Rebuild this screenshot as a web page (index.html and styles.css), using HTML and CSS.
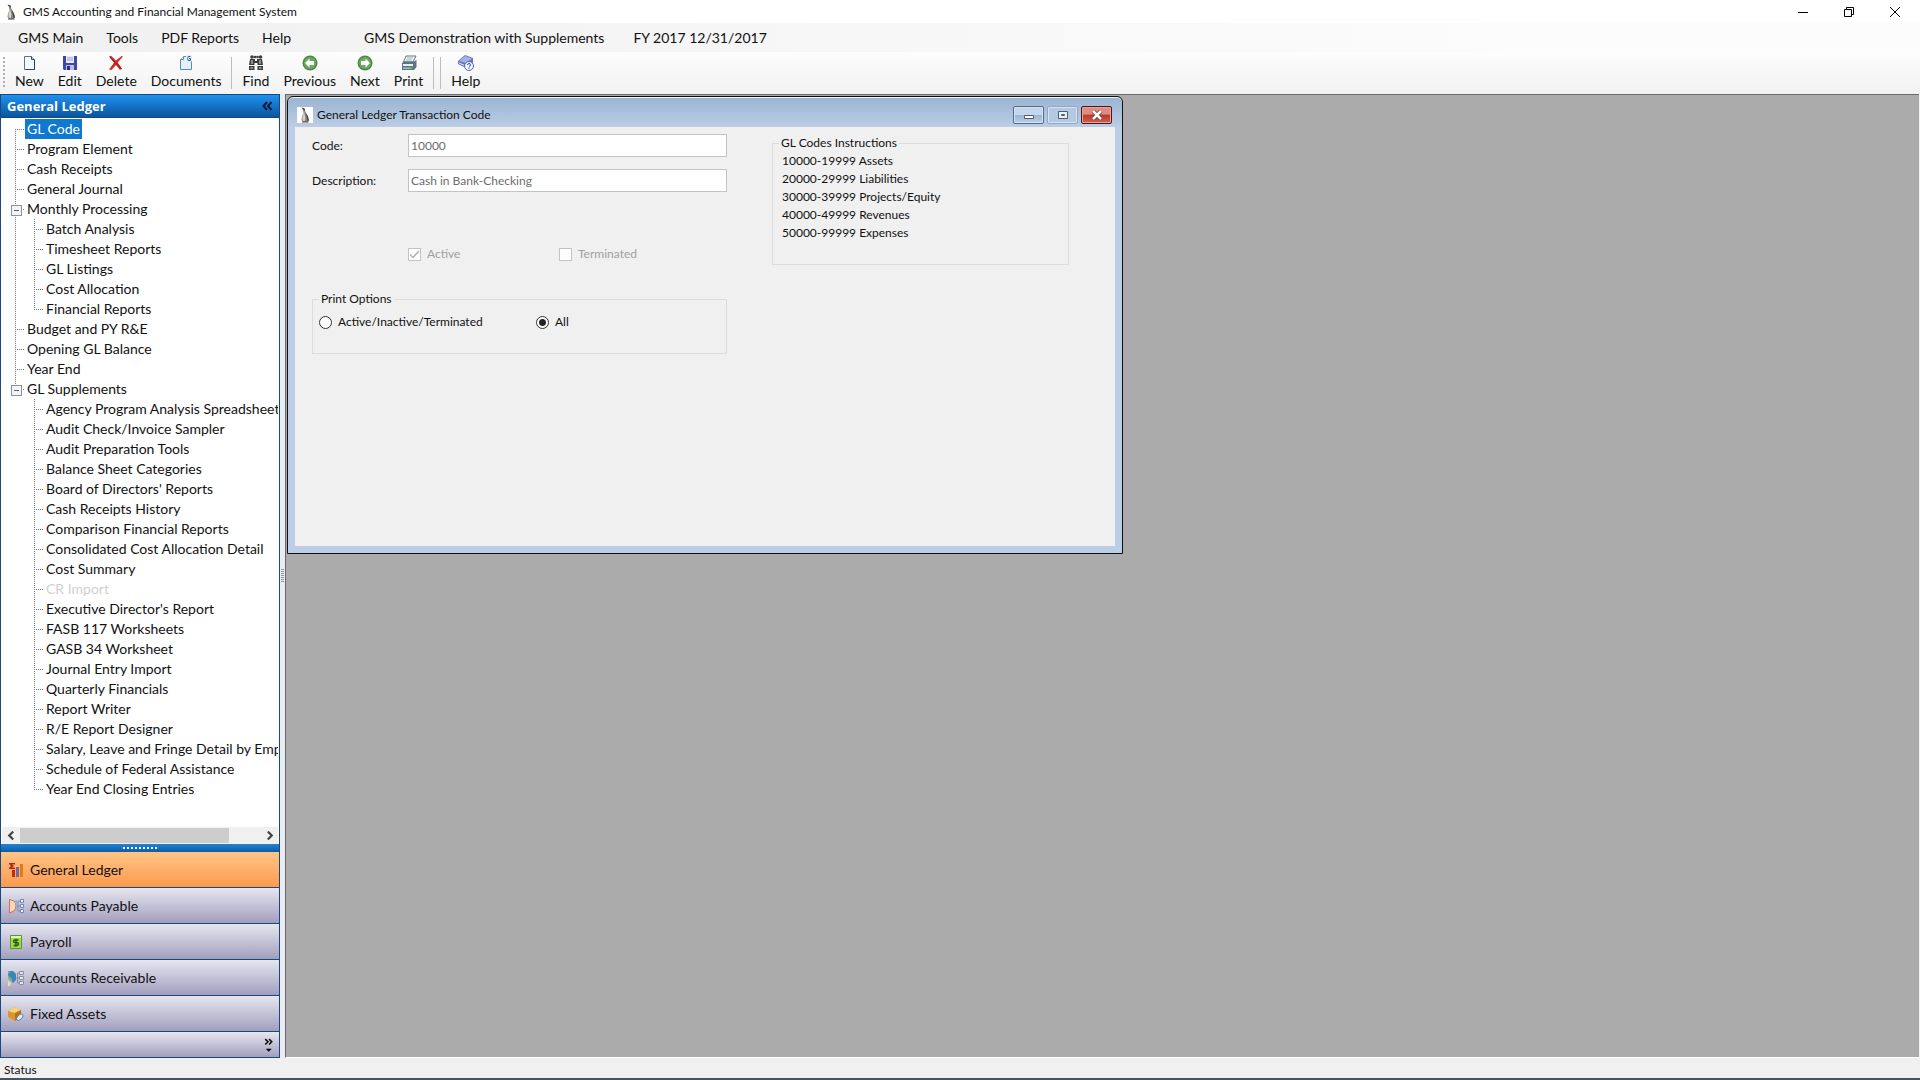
FILE: index.html
```html
<!DOCTYPE html>
<html lang="en">
<head>
<meta charset="utf-8">
<title>GMS Accounting and Financial Management System</title>
<link rel="stylesheet" href="styles.css">
</head>
<body>
<svg class="defs" aria-hidden="true">
  <symbol id="penguin" viewBox="0 0 16 16">
    <path d="M4.500 .5L7.500 1.500l1 3.500 2.500 4.500 1 4-1.500 1.500H6L4.500 13l.5-3.500L6.500 6 6 3z" fill="#8b8680"/>
    <path d="M7 5L5.500 10l.2 3.500 2 1 .6-4z" fill="#d8d4ce"/>
    <path d="M4.500 .5L7.500 1.500l.7 2L6.500 3zM8.500 5.500l2.500 4 1 4-1.500.5zM5 14.500h6.500v1H5z" fill="#4b4845"/>
  </symbol>
</svg>

<header class="titlebar">
  <svg class="icon"><use href="#penguin"/></svg>
  <h1>GMS Accounting and Financial Management System</h1>
  <div class="caption">
    <button aria-label="Minimize"><svg viewBox="0 0 10 10"><path d="M0 5.500h10"/></svg></button>
    <button aria-label="Restore"><svg viewBox="0 0 10 10"><path d="M.5 2.500h7v7h-7zM2.500 2.500v-2h7v7h-2"/></svg></button>
    <button aria-label="Close"><svg viewBox="0 0 10 10"><path d="M0 0l10 10M10 0L0 10"/></svg></button>
  </div>
</header>

<nav class="menubar">
  <button>GMS Main</button>
  <button>Tools</button>
  <button>PDF Reports</button>
  <button>Help</button>
  <span class="company">GMS Demonstration with Supplements</span>
  <span>FY 2017 12/31/2017</span>
</nav>

<div class="toolbar" role="toolbar">
  <span class="grip"></span>
  <button><svg class="icon" viewBox="0 0 16 16"><path d="M3.500 1.500h7l3 3v10h-10z" fill="#f4f9ff" stroke="#5f738c"/><path d="M10.500 1.500v3h3" fill="#c9d8ea" stroke="#31445c"/><path d="M13.500 5v9.500h-9" fill="none" stroke="#2f4159"/></svg>New</button>
  <button><svg class="icon" viewBox="0 0 16 16"><path d="M1 1h14v14H2l-1-1z" fill="#4146a0"/><path d="M4 1h8v7H4z" fill="#e6e9fa"/><path d="M5 3h6M5 5h6" stroke="#9aa2d8"/><path d="M4 10h8v5H4z" fill="#b9bfe6"/><path d="M5 11h3v4H5z" fill="#2a2e77"/></svg>Edit</button>
  <button><svg class="icon" viewBox="0 0 16 16"><path d="M1 1.500L3 .8l5 4.800L13.500 1l1.500.6-5.300 6 4.300 6-2 1.400L8 10l-4.500 5L1 14.500 6 7.800z" fill="#d22a2a"/><path d="M2 2l5 5.500L13.500 14" stroke="#8c1414" fill="none"/></svg>Delete</button>
  <button><svg class="icon" viewBox="0 0 16 16"><path d="M2.500 4.500l3-3h8v13h-11z" fill="#e4f1fc" stroke="#5a8bb8"/><path d="M2.500 4.500h3v-3" fill="#fff" stroke="#5a8bb8"/><path d="M8 0h6v6.500H8z" fill="#e4f1fc"/><path d="M12.500 1.500q-3-1-3 2t3 2v-2H11" fill="none" stroke="#2c5f94"/></svg>Documents</button>
  <span class="sep"></span>
  <button><svg class="icon" viewBox="0 0 16 16"><g fill="#3c3c3c"><circle cx="4" cy="2" r="1.800"/><circle cx="7" cy="2" r="1.300"/><circle cx="9.500" cy="2" r="1.300"/><circle cx="12.500" cy="2" r="1.800"/><path d="M2 4h5v2h2V4h5l1 6H9.500V8h-3v2H1zM1 11h5.500v4H1zM9.500 11H15v4H9.500z"/></g><path d="M4 5v4M12 5v4M2.500 13h2.500M11 13h2.500" stroke="#ddd"/></svg>Find</button>
  <button><svg class="icon" viewBox="0 0 16 16"><circle cx="8" cy="8" r="7.500" fill="#4a8a44"/><circle cx="8" cy="8" r="6" fill="#6fa860"/><path d="M3 8l4.500-4.500V6H12v4H7.500v2.500z" fill="#fff"/></svg>Previous</button>
  <button><svg class="icon" viewBox="0 0 16 16"><circle cx="8" cy="8" r="7.500" fill="#4a8a44"/><circle cx="8" cy="8" r="6" fill="#6fa860"/><path d="M13 8L8.500 3.500V6H4v4h4.500v2.500z" fill="#fff"/></svg>Next</button>
  <button><svg class="icon" viewBox="0 0 16 16"><path d="M5 1h10l-3 6H2.500z" fill="#f6fafc" stroke="#64757f"/><path d="M6 3h6M5 5h6" stroke="#8ba"/><path d="M1 8l2-1.500h10L15.500 5v7L13 15H1z" fill="#5d7480"/><path d="M2 9h10v2H2z" fill="#e6eff2"/><path d="M2 12.500h9V14H2z" fill="#a8bcc4"/><path d="M9 11.500h3v2H9z" fill="#35b24a"/></svg>Print</button>
  <span class="sep"></span>
  <span class="sep"></span>
  <button><svg class="icon" viewBox="0 0 16 16"><path d="M0 6L7 0l8 3v5l-7 5-8-4z" fill="#6d77c0"/><path d="M1 6l6-5 7 2.500L8 8z" fill="#a5aee6"/><path d="M1 8l7 3" stroke="#e3e6fa"/><circle cx="11" cy="11" r="4.500" fill="#f3f6ff" stroke="#4d69b5"/><path d="M9.500 10q0-1.500 1.500-1.500t1.500 1.300-1.500 1.700M11 12.500v1.200" stroke="#27479c" fill="none"/></svg>Help</button>
</div>

<div class="workspace">
  <aside class="sidebar">
    <header class="pane-title">
      <h2>General Ledger</h2>
      <button aria-label="Collapse"><svg viewBox="0 0 10 10"><path d="M4.500 1L1 5l3.500 4M9 1L5.500 5 9 9"/></svg></button>
    </header>
    <ul class="tree">
      <li><a class="selected" href="#">GL Code</a></li>
      <li><a href="#">Program Element</a></li>
      <li><a href="#">Cash Receipts</a></li>
      <li><a href="#">General Journal</a></li>
      <li class="branch"><a href="#">Monthly Processing</a>
        <ul>
          <li><a href="#">Batch Analysis</a></li>
          <li><a href="#">Timesheet Reports</a></li>
          <li><a href="#">GL Listings</a></li>
          <li><a href="#">Cost Allocation</a></li>
          <li><a href="#">Financial Reports</a></li>
        </ul>
      </li>
      <li><a href="#">Budget and PY R&amp;E</a></li>
      <li><a href="#">Opening GL Balance</a></li>
      <li><a href="#">Year End</a></li>
      <li class="branch"><a href="#">GL Supplements</a>
        <ul>
          <li><a href="#">Agency Program Analysis Spreadsheet</a></li>
          <li><a href="#">Audit Check/Invoice Sampler</a></li>
          <li><a href="#">Audit Preparation Tools</a></li>
          <li><a href="#">Balance Sheet Categories</a></li>
          <li><a href="#">Board of Directors' Reports</a></li>
          <li><a href="#">Cash Receipts History</a></li>
          <li><a href="#">Comparison Financial Reports</a></li>
          <li><a href="#">Consolidated Cost Allocation Detail</a></li>
          <li><a href="#">Cost Summary</a></li>
          <li><a class="disabled" href="#">CR Import</a></li>
          <li><a href="#">Executive Director's Report</a></li>
          <li><a href="#">FASB 117 Worksheets</a></li>
          <li><a href="#">GASB 34 Worksheet</a></li>
          <li><a href="#">Journal Entry Import</a></li>
          <li><a href="#">Quarterly Financials</a></li>
          <li><a href="#">Report Writer</a></li>
          <li><a href="#">R/E Report Designer</a></li>
          <li><a href="#">Salary, Leave and Fringe Detail by Emp</a></li>
          <li><a href="#">Schedule of Federal Assistance</a></li>
          <li><a href="#">Year End Closing Entries</a></li>
        </ul>
      </li>
    </ul>
    <div class="hscroll">
      <button aria-label="Scroll left"><svg viewBox="0 0 8 8"><path d="M5.500 .5L2 4l3.500 3.500"/></svg></button>
      <div class="track"><div class="thumb"></div></div>
      <button aria-label="Scroll right"><svg viewBox="0 0 8 8"><path d="M2.500 .5L6 4 2.500 7.500"/></svg></button>
    </div>
    <div class="splitter"><span></span></div>
    <nav class="modules">
      <button class="current"><svg class="icon" viewBox="0 0 16 16"><path d="M1 1h6v1.500H4L6 4 4 5.500h3V7H1V6l2-2-2-2z" fill="#b3261e"/><path d="M4 8h3v7H4z" fill="#c22a1c"/><path d="M8 5h3v10H8z" fill="#6d6a9c"/><path d="M12 2h3v13h-3z" fill="#e07b1a"/></svg>General Ledger</button>
      <button><svg class="icon" viewBox="0 0 16 16"><path d="M1.500 1.500L6 3q4 5 0 10l-4.500 2z" fill="#f4d9b8" stroke="#d9695a"/><path d="M6 3q5 5 0 10l3-1V2z" fill="#8fb2dc"/><path d="M9 8h3M10 3v10M10 3h2M10 13h2" stroke="#7a8aa8" fill="none"/><path d="M12.500 1.500h3v3h-3zM12.500 6.500h3v3h-3zM12.500 11.500h3v3h-3z" fill="#eef3fb" stroke="#6f86b0"/></svg>Accounts Payable</button>
      <button><svg class="icon" viewBox="0 0 16 16"><path d="M2.500 1.500h11v13h-11z" fill="#a8d850" stroke="#5a9a2a"/><path d="M3 2h10v2H3z" fill="#e3f5b8"/><path d="M10.500 6H7Q5.500 6 5.500 7.300T7 8.600h2q1.500 0 1.500 1.400T9 11.500H5.500M8 4.800v8" stroke="#1f6414" stroke-width="1.500" fill="none"/></svg>Payroll</button>
      <button><svg class="icon" viewBox="0 0 16 16"><path d="M0 1h5l3 3v6l-3 3-5-5z" fill="#3d83bd"/><path d="M0 5l4 4v3l-4-3zM0 1l3 1-3 2z" fill="#7fb08a"/><path d="M0 11l3 2-1 3H0z" fill="#f2d9a0"/><path d="M8 8h3M9.500 3v10M9.500 3H11M9.500 13H11" stroke="#8b8f9e" fill="none"/><path d="M11.500 1.500h4v3h-4zM11.500 6.500h4v3h-4zM11.500 11.500h4v3h-4z" fill="#e4e6ee" stroke="#8b8f9e"/></svg>Accounts Receivable</button>
      <button><svg class="icon" viewBox="0 0 16 16"><path d="M0 5l7-4 6 3v6l-6 5-7-4z" fill="#d9962b"/><path d="M0 5l7-4 6 3-6 3z" fill="#f7d37c"/><path d="M7 7v8l6-5V4z" fill="#b87418"/><path d="M8.500 12l3-3.500q2-1 3 0t.3 2.500l-3 3q-1.500 1-2.800 0t-.5-2z" fill="#e3eaf5" stroke="#5a78a8"/></svg>Fixed Assets</button>
      <div class="overflow"><button aria-label="Configure buttons"><svg viewBox="0 0 8 13"><path d="M1 1l2.500 2.500L1 6M4.500 1L7 3.500 4.500 6" fill="none" stroke="#111" stroke-width="1.500"/><path d="M1.500 10h5.500L4.200 12.700z"/></svg></button></div>
    </nav>
  </aside>

  <div class="gutter"><span></span></div>

  <main class="mdi">
    <section class="window">
      <header class="window-title">
        <svg class="icon"><use href="#penguin"/></svg>
        <h2>General Ledger Transaction Code</h2>
        <div class="window-buttons">
          <button aria-label="Minimize"><svg viewBox="0 0 12 10"><path d="M1.500 5.500h9v3h-9z" fill="#fff" stroke="#4c5b70"/></svg></button>
          <button class="dim" aria-label="Maximize"><svg viewBox="0 0 12 10"><path d="M1.500 1.500h9v7h-9z" fill="#e8f0f8" stroke="#4c5b70"/><path d="M4.500 4.500h3v1h-3z" fill="none" stroke="#4c5b70"/></svg></button>
          <button class="close" aria-label="Close"><svg viewBox="0 0 12 10"><path d="M2 1l8 8M10 1L2 9" stroke="#6e3030" stroke-width="4"/><path d="M2 1l8 8M10 1L2 9" stroke="#fff" stroke-width="2.500"/></svg></button>
        </div>
      </header>
      <form class="client">
        <div class="details">
          <div class="field"><label for="code">Code:</label><input id="code" type="text" value="10000" disabled></div>
          <div class="field"><label for="desc">Description:</label><input id="desc" type="text" value="Cash in Bank-Checking" disabled></div>
          <div class="checks">
            <label><input type="checkbox" checked disabled>Active</label>
            <label><input type="checkbox" disabled>Terminated</label>
          </div>
          <fieldset class="options">
            <legend>Print Options</legend>
            <label><input type="radio" name="scope">Active/Inactive/Terminated</label>
            <label><input type="radio" name="scope" checked>All</label>
          </fieldset>
        </div>
        <fieldset class="instructions">
          <legend>GL Codes Instructions</legend>
          <p>10000-19999 Assets</p>
          <p>20000-29999 Liabilities</p>
          <p>30000-39999 Projects/Equity</p>
          <p>40000-49999 Revenues</p>
          <p>50000-99999 Expenses</p>
        </fieldset>
      </form>
    </section>
  </main>
</div>

<footer class="status">Status</footer>
</body>
</html>
```
FILE: styles.css
```css
:root {
  --ui: "Lato", "Noto Sans", sans-serif;
  --caption: "Open Sans", "Noto Sans", sans-serif;
  --navy: #174a7c;
  --dots-v: repeating-linear-gradient(#6f7a86 0 1px, transparent 1px 2px);
  --dots-h: repeating-linear-gradient(90deg, #6f7a86 0 1px, transparent 1px 2px);
}

* { box-sizing: border-box; }

body {
  margin: 0;
  height: 100vh;
  display: flex;
  flex-direction: column;
  overflow: hidden;
  font: 14px/20px var(--ui);
  color: #111;
  background: #f0f0f0;
}

h1, h2, p, ul { margin: 0; padding: 0; }

ul { list-style: none; }

button {
  margin: 0;
  padding: 0;
  border: 0;
  background: none;
  font: inherit;
  color: inherit;
}

a { color: inherit; text-decoration: none; }

.defs { position: absolute; width: 0; height: 0; }

.icon { width: 16px; height: 16px; flex: none; display: block; }

/* Application title bar */
.titlebar {
  height: 23px;
  flex: none;
  display: flex;
  align-items: center;
  gap: 4px;
  padding: 0 2px 0 3px;
  background: #fff;
}

.titlebar h1 { flex: 1; font: 12px/20px var(--ui); }

.caption { display: flex; }

.caption button { width: 46px; height: 20px; display: grid; place-items: center; }

.caption svg { width: 10px; height: 10px; fill: none; stroke: #000; }

/* Menu and toolbar */
.menubar {
  height: 29px;
  flex: none;
  display: flex;
  align-items: center;
  gap: 23px;
  padding-left: 18px;
  background: linear-gradient(90deg, #f0f0f0, #fcfcfc 80%);
}

.company { margin: 0 6px 0 50px; }

.toolbar {
  height: 42px;
  flex: none;
  display: flex;
  align-items: flex-start;
  gap: 14px;
  padding: 3px 3px 0;
  background: linear-gradient(#fdfdfd, #f2f2f2);
}

.toolbar button {
  display: flex;
  flex-direction: column;
  align-items: center;
}

.toolbar .grip {
  width: 2px;
  height: 32px;
  margin-top: 2px;
  margin-right: -4px;
  background: repeating-linear-gradient(#b0b0b0 0 2px, transparent 2px 4px);
}

.toolbar .sep { width: 1px; height: 32px; margin: 2px -4px 0; background: #bdbdbd; }

/* Workspace */
.workspace { flex: 1; min-height: 0; display: flex; }

.sidebar {
  width: 280px;
  flex: none;
  display: flex;
  flex-direction: column;
  border: 1px solid var(--navy);
  background: #fff;
}

.pane-title {
  height: 23px;
  flex: none;
  display: flex;
  align-items: center;
  justify-content: space-between;
  padding: 0 6px;
  color: #fff;
  background: linear-gradient(#2090ee, #0a559f);
  border-bottom: 1px solid var(--navy);
}

.pane-title h2 { font: bold 13px/20px var(--caption); }

.pane-title svg { width: 11px; height: 10px; display: block; fill: none; stroke: #0a1c38; stroke-width: 2; }

.tree {
  flex: 1;
  min-height: 0;
  overflow: hidden;
  margin-right: 1px;
  padding-top: 1px;
  white-space: nowrap;
}

.tree li {
  padding-left: 24px;
  background: var(--dots-v) 14px 0 / 1px 100% no-repeat, var(--dots-h) 14px 10px / 9px 1px no-repeat;
}

.tree > li:first-child { background-position: 14px 10px; }

.tree li:last-child { background-size: 1px 10px, 9px 1px; }

.tree a { display: inline-block; height: 20px; padding: 0 2px; vertical-align: top; }

.tree li ul { margin-left: -5px; }

.tree .branch::before {
  content: "";
  float: left;
  width: 9px;
  height: 9px;
  margin: 6px 0 0 -14px;
  border: 1px solid #8a929c;
  background: linear-gradient(#4a5fa0, #4a5fa0) center / 5px 1px no-repeat, #f4f4f4;
}

.tree .selected { color: #fff; background: #0f78cf; }

.tree .disabled { color: #d0d0d0; }

.hscroll { height: 17px; flex: none; display: flex; margin: 0 1px; background: #f0f0f0; }

.hscroll button { width: 18px; display: grid; place-items: center; }

.hscroll svg { width: 9px; height: 9px; fill: none; stroke: #444; stroke-width: 2; }

.hscroll .track { flex: 1; }

.hscroll .thumb { width: 87%; height: 15px; margin-top: 1px; background: #cdcdcd; }

.splitter {
  height: 8px;
  flex: none;
  display: grid;
  place-items: center;
  background: linear-gradient(#2482d2, #0c5ca8);
}

.splitter span { width: 35px; height: 2px; background: repeating-linear-gradient(90deg, #fff 0 2px, transparent 2px 4px); }

.modules > button {
  width: 100%;
  height: 36px;
  display: flex;
  align-items: center;
  gap: 6px;
  padding-left: 7px;
  border-bottom: 1px solid var(--navy);
}

.modules > button, .overflow { background: linear-gradient(#e6e6f0, #a29fbe); }

.modules > .current { background: linear-gradient(#ffc585, #fd9950); }

.overflow { height: 25px; display: flex; justify-content: flex-end; padding: 4px 6px; }

.overflow svg { width: 9px; height: 14px; display: block; }

.gutter { width: 5px; flex: none; display: flex; align-items: center; background: #e9edf3; }

.gutter span { width: 3px; height: 14px; margin-left: 1px; background: repeating-linear-gradient(#8c96a0 0 1px, transparent 1px 2px); }

.mdi {
  flex: 1;
  position: relative;
  margin-right: 1px;
  border: 1px solid #696969;
  border-right: 0;
  border-bottom-color: #fff;
  background: #ababab;
}

/* Child window */
.window {
  position: absolute;
  left: 1px;
  top: 1px;
  width: 836px;
  padding: 0 7px 7px;
  border: 1px solid #111;
  border-radius: 6px 6px 0 0;
  box-shadow: inset 0 1px #e8f1fa;
  background: linear-gradient(#9ab4d0, #bccde6 30px, #bccde6);
}

.window-title { height: 30px; display: flex; align-items: center; gap: 4px; padding: 6px 3px 0 2px; }

.window-title .icon { background: #fff; }

.window-title h2 { flex: 1; font: 12px/20px var(--ui); }

.window-buttons { display: flex; gap: 3px; }

.window-buttons button {
  width: 31px;
  height: 18px;
  display: grid;
  place-items: center;
  border: 1px solid #4f6c90;
  border-radius: 2px;
  box-shadow: inset 0 0 0 1px #d5e4f3;
  background: linear-gradient(#c4d6ea 50%, #9ab3d0 50%, #b9d0e8);
}

.window-buttons .dim { border-color: #8fa9c8; background: #b4c9e1; }

.window-buttons .close {
  border-color: #4a1420;
  box-shadow: inset 0 0 0 1px #e8a59c;
  background: linear-gradient(#dc8c80 45%, #b8382a 50%, #d0624a);
}

.window-buttons svg { width: 12px; height: 10px; }

.client {
  min-height: 419px;
  display: grid;
  grid-template-columns: 415px 297px;
  column-gap: 45px;
  align-items: start;
  padding: 7px 17px;
  background: #f0f0f0;
  font-size: 12px;
  line-height: 18px;
}

.field { display: grid; grid-template-columns: 96px 1fr; align-items: center; margin-bottom: 12px; }

.field input {
  height: 23px;
  padding: 0 2px;
  border: 1px solid #c3c3c3;
  background: #fff;
  font: inherit;
  color: #6d6d6d;
}

.checks { display: grid; grid-template-columns: 151px 1fr; margin: 53px 0 0 96px; color: #a0a0a0; }

.checks label, .options label { display: flex; align-items: center; gap: 6px; }

.client [type="checkbox"], .client [type="radio"] {
  appearance: none;
  width: 13px;
  height: 13px;
  margin: 0;
  border: 1px solid #c3c3c3;
  background: #fff;
}

.client [type="checkbox"]:checked {
  background: #fff url("data:image/svg+xml,%3Csvg xmlns='http://www.w3.org/2000/svg' viewBox='0 0 11 11'%3E%3Cpath d='M1 5.500l3 3L10 2' fill='none' stroke='%23b0b0b0' stroke-width='1.500'/%3E%3C/svg%3E");
}

.client [type="radio"] { border-color: #333; border-radius: 50%; }

.client [type="radio"]:checked { background: radial-gradient(#222 3px, #fff 4px); }

fieldset { min-width: 0; margin: 0; padding: 0 6px; border: 1px solid #dcdcdc; }

legend { padding: 0 2px; }

.options {
  height: 64px;
  display: grid;
  grid-template-columns: 217px 1fr;
  align-items: start;
  margin-top: 27px;
  padding-top: 5px;
}

.instructions { height: 131px; }

.instructions p { padding-left: 3px; }

/* Status bar */
.status {
  height: 22px;
  flex: none;
  padding: 3px 4px 0;
  border-bottom: 2px solid #46545f;
  font-size: 12px;
  line-height: 18px;
}
```
